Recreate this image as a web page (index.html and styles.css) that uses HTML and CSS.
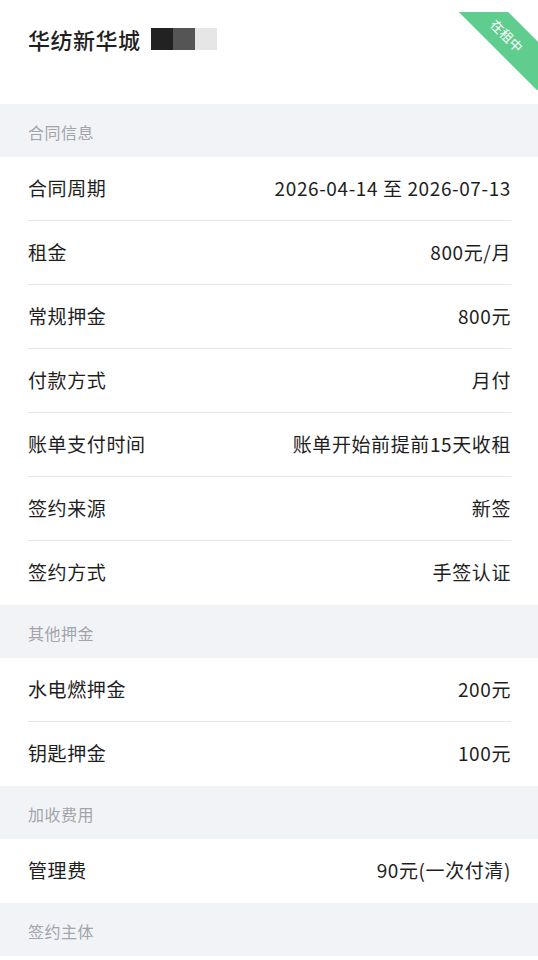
FILE: index.html
```html
<!DOCTYPE html>
<html lang="zh-CN">
  <head>
    <meta charset="UTF-8" />
    <meta name="viewport" content="width=device-width, initial-scale=1.0" />
    <title>合同详情</title>
    <link rel="stylesheet" href="styles.css">
  </head>
  <body>
    <div class="header">
      <div class="title">
        华纺新华城
        <span class="mask">
          <i class="m1"></i><i class="m2"></i><i class="m3"></i>
        </span>
      </div>
      <div class="ribbon-box">
        <div class="ribbon">在租中</div>
      </div>
    </div>

    <div class="section">合同信息</div>
    <div class="list">
      <div class="row"><span>合同周期</span><span>2026-04-14 至 2026-07-13</span></div>
      <div class="row"><span>租金</span><span>800元/月</span></div>
      <div class="row"><span>常规押金</span><span>800元</span></div>
      <div class="row"><span>付款方式</span><span>月付</span></div>
      <div class="row"><span>账单支付时间</span><span>账单开始前提前15天收租</span></div>
      <div class="row"><span>签约来源</span><span>新签</span></div>
      <div class="row"><span>签约方式</span><span>手签认证</span></div>
    </div>

    <div class="section">其他押金</div>
    <div class="list">
      <div class="row"><span>水电燃押金</span><span>200元</span></div>
      <div class="row"><span>钥匙押金</span><span>100元</span></div>
    </div>

    <div class="section">加收费用</div>
    <div class="list">
      <div class="row"><span>管理费</span><span>90元(一次付清)</span></div>
    </div>

    <div class="section">签约主体</div>
  </body>
</html>
```

FILE: styles.css
```css
* {
  padding: 0;
  margin: 0;
  box-sizing: border-box;
}
body {
  width: 538px;
  min-height: 960px;
  background-color: #ffffff;
  color: #1e1e1e;
  font-family: "Noto Sans CJK SC", "Noto Sans", sans-serif;
}
.header {
  position: relative;
  height: 104px;
  padding: 0 28px 26px;
  display: flex;
  align-items: center;
  overflow: hidden;
}
.title {
  display: flex;
  align-items: center;
  font-size: 22px;
  letter-spacing: 0.5px;
  font-weight: 500;
  color: #1f1f1f;
}
.mask {
  display: flex;
  margin-left: 10px;
}
.mask i {
  display: block;
  width: 22px;
  height: 22px;
}
.m1 {
  background-color: #222222;
}
.m2 {
  background-color: #555555;
}
.m3 {
  background-color: #e6e6e6;
}
.ribbon-box {
  position: absolute;
  top: 12px;
  right: 0;
  width: 80px;
  height: 80px;
  overflow: hidden;
}
.ribbon {
  position: absolute;
  left: -11px;
  top: 6px;
  width: 120px;
  height: 35px;
  line-height: 35px;
  text-align: center;
  background-color: #5fcd8e;
  color: #ffffff;
  font-size: 13px;
  transform: rotate(45deg);
}
.section {
  height: 53px;
  display: flex;
  align-items: center;
  padding: 2px 28px 0;
  background-color: #f2f3f7;
  color: #a3a4aa;
  font-size: 16px;
  letter-spacing: 0.5px;
}
.list {
  padding: 0 27px 0 28px;
}
.row {
  height: 64px;
  display: flex;
  align-items: center;
  justify-content: space-between;
  padding-bottom: 3px;
  border-bottom: 1px solid #e6e6e8;
  font-size: 19px;
  letter-spacing: 0.6px;
  color: #1e1e1e;
}
.row:last-child {
  border-bottom: none;
}
```
